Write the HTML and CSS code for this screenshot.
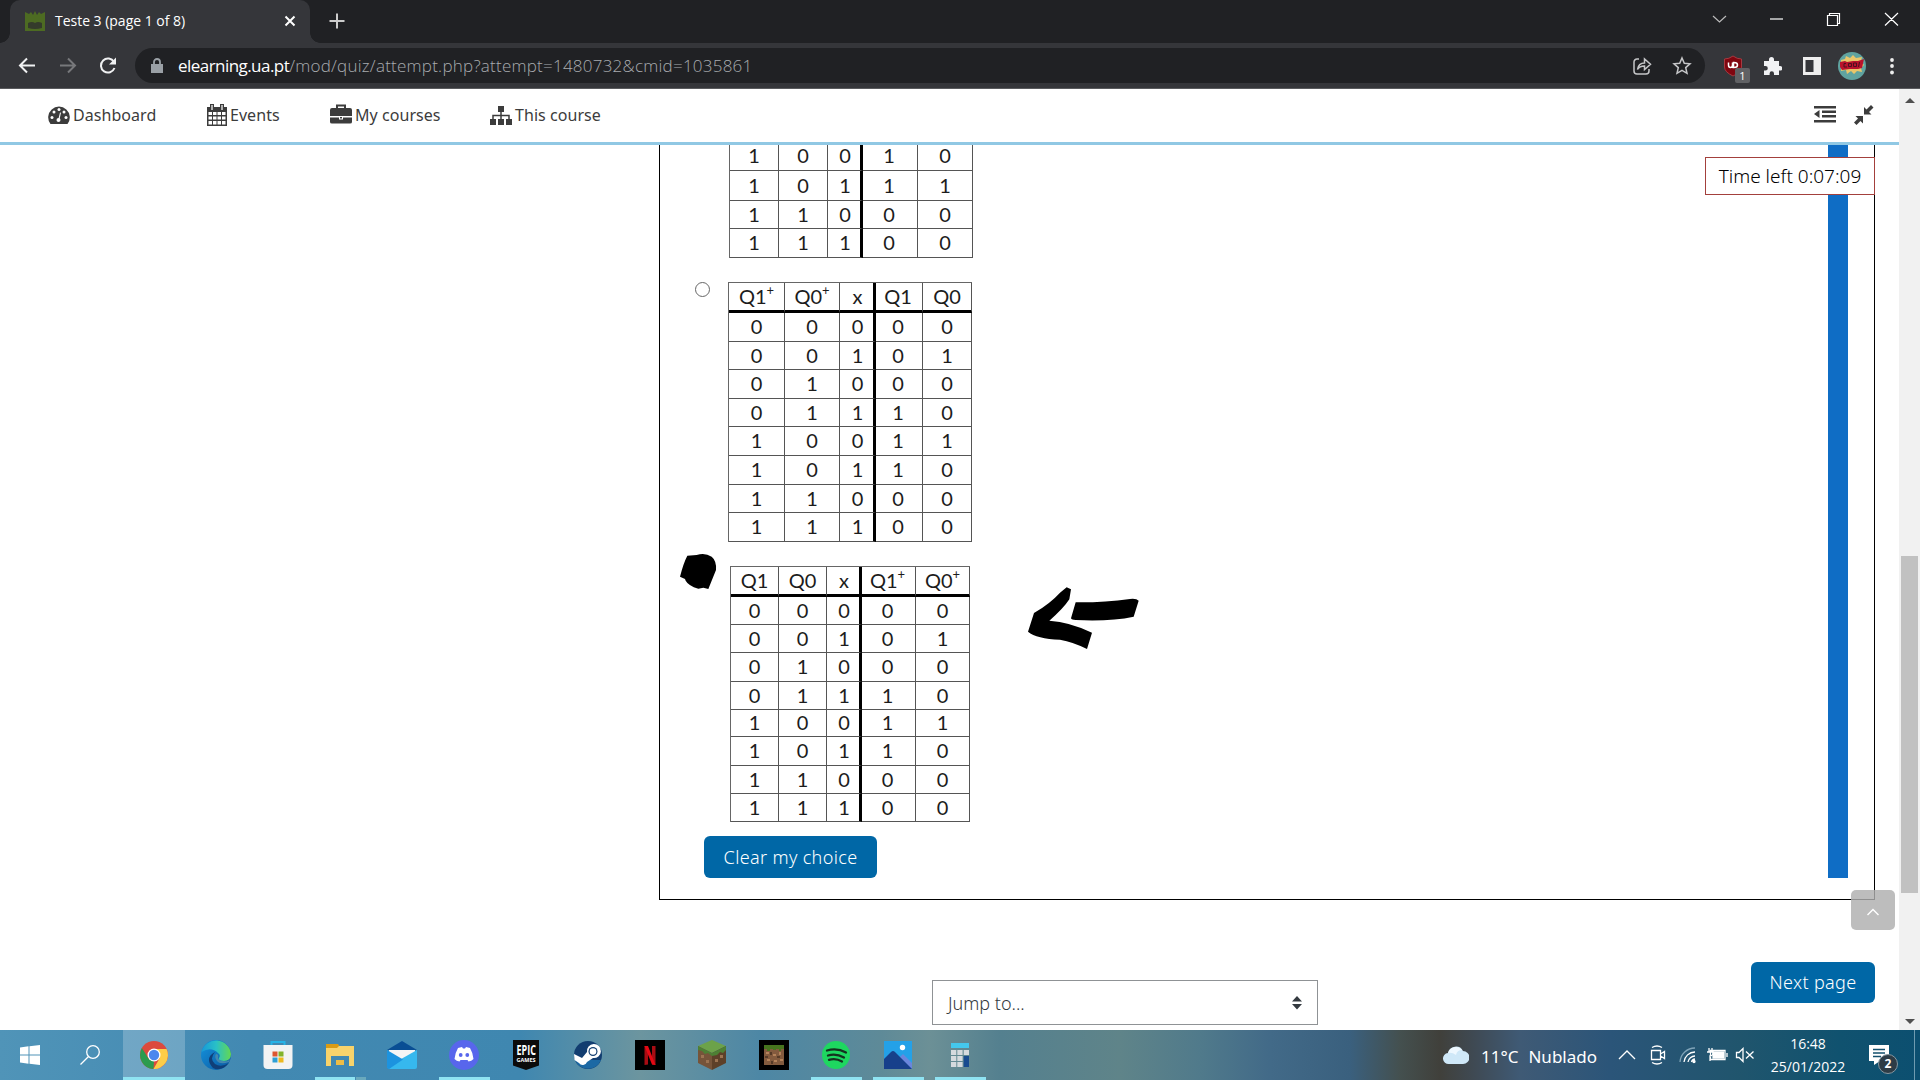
FILE: index.html
```html
<!DOCTYPE html>
<html lang="en">
<head>
<meta charset="utf-8">
<title>Teste 3 (page 1 of 8)</title>
<link rel="stylesheet" href="styles.css">
</head>
<body>
<div class="tabstrip">
  <div class="tab">
    <svg class="favicon" width="20" height="20" viewBox="0 0 20 20"><path fill="#4d6b22" d="M0 1l4 2 2-2 2 3 2-4 2 4 2-3 2 2 4-2v19H0z"/><path fill="#343b2b" d="M3 12q4-2 7 0 3-2 7 0v5q-7 2-14 0z"/></svg>
    <span class="tab-title">Teste 3 (page 1 of 8)</span>
    <svg class="tab-close" width="12" height="12" viewBox="0 0 12 12"><path d="M1.500 1.500l9 9m0-9l-9 9" stroke="#fff" stroke-width="2"/></svg>
  </div>
  <svg class="new-tab" width="16" height="16" viewBox="0 0 16 16"><path d="M8 .5v15M.5 8h15" stroke="#ccc" stroke-width="2"/></svg>
  <svg class="window-controls" width="190" height="16" viewBox="0 0 190 16" fill="none" stroke="#fff" stroke-width="1.200"><path d="M4 5l6.500 6 6.500-6" stroke="#bbb"/><path d="M61 8h13"/><path d="M118.500 4.500h10v10h-10zM120.500 4.500v-2h10v10h-2M176 2l13 12.500m0-12.500l-13 12.500"/></svg>
</div>
<div class="toolbar">
  <svg class="nav-buttons" width="120" height="20" viewBox="0 0 120 20" fill="none" stroke="#f0f1f2" stroke-width="2"><path d="M17 9.500H2M9 2.500l-7 7 7 7"/><path stroke="#77787b" d="M42 9.500h15M50 2.500l7 7-7 7"/><path d="M96 6a7 7 0 1 0 .5 6"/><path fill="#f0f1f2" stroke="none" d="M98 1.500v7h-7z"/></svg>
  <div class="omnibox">
    <svg width="12" height="16" viewBox="0 0 12 16"><path fill="#9aa0a6" d="M0 6h12v9H0z"/><path d="M3 7V4a3 3 0 0 1 6 0v3" fill="none" stroke="#9aa0a6" stroke-width="1.800"/></svg>
    <span class="url"><b>elearning.ua.pt</b>/mod/quiz/attempt.php?attempt=1480732&amp;cmid=1035861</span>
    <svg class="share" width="60" height="20" viewBox="0 0 60 20" fill="none" stroke="#c5c6c8" stroke-width="1.500"><path d="M6 3H4a3 3 0 0 0-3 3v9a3 3 0 0 0 3 3h9a3 3 0 0 0 3-3v-2M4.500 13.500q1-6.500 7-6.500V3l6 5.300-6 5.200v-3.500q-5 0-7 3.500z"/><path d="M49 2l2.300 5.300 5.700.5-4.300 3.800 1.300 5.700-5-3-5 3 1.300-5.700L41 7.800l5.700-.5z"/></svg>
  </div>
  <div class="extension">
    <svg width="26" height="28" viewBox="0 0 26 28"><path fill="#800610" stroke="#a63a40" d="M10 1q4 3 8.500 3v8q0 5-8.500 9-8.500-4-8.500-9V4q4.500 0 8.500-3z"/><path d="M5.500 7.500v2.500q0 2.500 2 2.500t2-2.500V7.500m0 5h1.500q3.500 0 3.500-2.500t-3.500-2.500H10.500v5" fill="none" stroke="#fff" stroke-width="1.500"/></svg>
    <span class="count">1</span>
  </div>
  <svg class="puzzle" width="18" height="18" viewBox="0 0 18 18"><path fill="#f1f2f4" d="M0 4h5V2.500a2.500 2.500 0 0 1 5 0V4h5v5h1a2.300 2.300 0 0 1 0 4.600h-1V18h-5v-1.500a2.200 2.200 0 0 0-4.400 0V18H0v-4.500h1.500a2.300 2.300 0 0 0 0-4.600H0z"/></svg>
  <svg class="side-panel" width="18" height="18" viewBox="0 0 18 18"><path fill="#eee" d="M0 0h18v18H0z"/><path fill="#35363a" d="M2.500 3h8v12h-8z"/></svg>
  <svg class="avatar" width="28" height="28" viewBox="0 0 28 28"><circle cx="14" cy="14" r="14" fill="#5fa3a0"/><path fill="#e9c66a" d="M3 8l4-1 1-3 4 2 3-3 3 3 6-1-1 4 3 4-3 3 1 4-5-1-3 3-3-3-4 3-1-4-5 1z"/><path fill="#b9132b" d="M2 10l5-1 2 1 6-1 5 0 6-2-2 9-4 1-8 0-8 1-2-3z"/><path d="M8 11.500l-2 0v3.500h3m1.500-3.500v3h3v-3zm5-.5v3.500h3v-3.500zm6-1l-1 5" stroke="#4a1020" fill="none"/></svg>
  <svg class="kebab" width="4" height="18" viewBox="0 0 4 18" fill="#eee"><circle cx="2" cy="3" r="1.900"/><circle cx="2" cy="9" r="1.900"/><circle cx="2" cy="15.500" r="1.900"/></svg>
</div>
<div class="viewport">
  <div class="page">
    <header class="site-nav">
      <a class="nav-dashboard"><svg width="22" height="22" viewBox="0 0 22 22"><path fill="#3c3c3c" d="M2.500 20A10.800 10.800 0 1 1 19.500 20z"/><g fill="#fff"><circle cx="4" cy="13.500" r="1.500"/><circle cx="6" cy="8" r="1.500"/><circle cx="11" cy="5.500" r="1.500"/><circle cx="16" cy="8" r="1.500"/><circle cx="18" cy="13.500" r="1.500"/><circle cx="10.500" cy="16" r="2"/><path d="M12 8.500l1 .3-1.700 7.500-1.200-.2z"/></g></svg>Dashboard</a>
      <a class="nav-events"><svg width="20" height="22" viewBox="0 0 20 22"><path fill="#3c3c3c" d="M0 3h20v19H0z"/><path stroke="#3c3c3c" stroke-width="4" d="M5 0v5M15 0v5"/><path stroke="#fff" stroke-width="1.200" d="M5 1v5M15 1v5"/><path fill="#fff" d="M1.500 8h3.500v3H1.500zM6 8h3.500v3H6zM10.500 8H14v3h-3.500zM15 8h3.500v3H15zM1.500 12.500h3.500v3H1.500zm4.500 0h3.500v3H6zm4.500 0H14v3h-3.500zm4.500 0h3.500v3H15zM1.500 17h3.500v3.500H1.500zM6 17h3.500v3.500H6zm4.500 0H14v3.500h-3.500zm4.500 0h3.500v3.500H15z"/></svg>Events</a>
      <a class="nav-mine"><svg width="22" height="22" viewBox="0 0 22 22"><path d="M7 5V1.500h8V5" fill="none" stroke="#3c3c3c" stroke-width="2"/><path fill="#3c3c3c" d="M2 4h18q2 0 2 2v6H0V6q0-2 2-2zM0 13.500h9v2h4v-2h9V18q0 1.500-2 1.500H2q-2 0-2-1.500zM10 13h2v1.500h-2z"/></svg>My courses</a>
      <a class="nav-course"><svg width="22" height="22" viewBox="0 0 22 22"><path fill="#3c3c3c" d="M8 2h6v6H8zM0 15h6v6H0zM8 15h6v6H8zM16 15h6v6h-6z"/><path d="M11 7v9M3 16v-4.500h16V16" fill="none" stroke="#3c3c3c" stroke-width="1.500"/></svg>This course</a>
      <svg class="view-tools" width="60" height="20" viewBox="0 0 60 20" fill="#3c3c3c"><path d="M0 1h22v2.600H0zM8 5.500h14v2.600H8zM8 10h14v2.600H8zM0 15h22v2.600H0zM5.500 5v8L0 9z"/><path d="M50 9.500V2l2.500 2.500L57 0l2.500 2.500L55 7l2.500 2.500zM49 11v7.500L46.500 16 42.500 20 40 17.500 44 13.500 41.500 11z"/></svg>
    </header>
    <main class="quiz">
      <div class="timer">Time left 0:07:09</div>
      <section class="question">
        <div class="answers">
          <div class="truth t1">
            <i>1</i><i>0</i><i>0</i><i>1</i><i>0</i>
            <i>1</i><i>0</i><i>1</i><i>1</i><i>1</i>
            <i>1</i><i>1</i><i>0</i><i>0</i><i>0</i>
            <i>1</i><i>1</i><i>1</i><i>0</i><i>0</i>
          </div>
          <div class="choice">
            <span class="radio"></span>
            <div class="truth t2">
              <i class="h">Q1<sup>+</sup></i><i class="h">Q0<sup>+</sup></i><i class="h">x</i><i class="h">Q1</i><i class="h">Q0</i>
              <i>0</i><i>0</i><i>0</i><i>0</i><i>0</i>
              <i>0</i><i>0</i><i>1</i><i>0</i><i>1</i>
              <i>0</i><i>1</i><i>0</i><i>0</i><i>0</i>
              <i>0</i><i>1</i><i>1</i><i>1</i><i>0</i>
              <i>1</i><i>0</i><i>0</i><i>1</i><i>1</i>
              <i>1</i><i>0</i><i>1</i><i>1</i><i>0</i>
              <i>1</i><i>1</i><i>0</i><i>0</i><i>0</i>
              <i>1</i><i>1</i><i>1</i><i>0</i><i>0</i>
            </div>
          </div>
          <div class="truth t3">
            <i class="h">Q1</i><i class="h">Q0</i><i class="h">x</i><i class="h">Q1<sup>+</sup></i><i class="h">Q0<sup>+</sup></i>
            <i>0</i><i>0</i><i>0</i><i>0</i><i>0</i>
            <i>0</i><i>0</i><i>1</i><i>0</i><i>1</i>
            <i>0</i><i>1</i><i>0</i><i>0</i><i>0</i>
            <i>0</i><i>1</i><i>1</i><i>1</i><i>0</i>
            <i>1</i><i>0</i><i>0</i><i>1</i><i>1</i>
            <i>1</i><i>0</i><i>1</i><i>1</i><i>0</i>
            <i>1</i><i>1</i><i>0</i><i>0</i><i>0</i>
            <i>1</i><i>1</i><i>1</i><i>0</i><i>0</i>
          </div>
          <a class="btn clear">Clear my choice</a>
        </div>
        <div class="edge-bar"></div>
      </section>
      <svg class="ink" width="480" height="120" viewBox="0 0 1440 360"><path d="M22 47L50 45Q75 37 95 50Q110 62 108 90L85 147L70 143L55 146Q25 137 17 122L15 117L0 110Q10 70 22 47Z"/><g transform="translate(0 41)"><path d="M1160 101L1173 107L1168 137Q1150 165 1108 201Q1170 205 1236 237L1221 286Q1180 265 1140 258Q1070 255 1044 234L1062 178Q1110 150 1140 117Z"/><path d="M1187 146Q1270 147 1350 136Q1370 134 1376 141L1361 189Q1290 204 1187 199Q1175 199 1173 194Z"/></g></svg>
      <div class="page-actions">
        <div class="jump">Jump to...<svg width="10" height="14" viewBox="0 0 10 14"><path fill="#343a40" d="M0 5.500L5 0l5 5.500zM0 8h10l-5 5.500z"/></svg></div>
        <a class="btn next">Next page</a>
      </div>
      <div class="to-top"><svg width="12" height="8" viewBox="0 0 12 8"><path d="M.5 7L6 1.500 11.500 7" fill="none" stroke="#fff" stroke-width="1.400"/></svg></div>
    </main>
  </div>
  <div class="scrollbar"><span class="arrow-up"></span><span class="thumb"></span><span class="arrow-down"></span></div>
</div>
<footer class="taskbar">
  <div class="app start"><svg width="20" height="20" viewBox="0 0 20 20" fill="#fff"><path d="M0 2.500l8.500-1.200v8.200H0zM9.500 1.200L20 0v9.500H9.500zM0 10.500h8.500v8.200L0 17.500zM9.500 10.500H20V20L9.500 18.800z"/></svg></div>
  <div class="app search"><svg width="20" height="20" viewBox="0 0 20 20" fill="none" stroke="#fff" stroke-width="1.300"><circle cx="13" cy="7" r="6.300"/><path d="M8.500 11.500L.5 19.500"/></svg></div>
  <div class="app open active"><svg width="28" height="28" viewBox="0 0 28 28"><circle cx="14" cy="14" r="14" fill="#dc4a3d"/><path fill="#2c9b4f" d="M1.900 7L8.500 17.500 14 20.500 13.500 28A14 14 0 0 1 1.900 7z"/><path fill="#fccd48" d="M14 8h12.600A14 14 0 0 1 13.500 28L19.500 17.500z"/><circle cx="14" cy="14" r="6.500" fill="#fff"/><circle cx="14" cy="14" r="5.200" fill="#4c87ee"/></svg></div>
  <div class="app"><svg width="30" height="30" viewBox="0 0 30 30"><defs><linearGradient id="edge-top"><stop stop-color="#1899d8"/><stop offset=".5" stop-color="#29c0c7"/><stop offset="1" stop-color="#64d851"/></linearGradient><linearGradient id="edge-low" x1="0" y1="0" x2="1" y2="1"><stop stop-color="#1595df"/><stop offset="1" stop-color="#0a579f"/></linearGradient></defs><circle cx="15" cy="15" r="15" fill="url(#edge-low)"/><path fill="url(#edge-top)" d="M.5 12A15 15 0 0 1 30 14q0 7-7 7-6 0-5-3 2-3-1-5Q10 6 .5 12z"/><path fill="#103f78" d="M14 12q-6 7 0 12 6 4 14-1Q20 32 12 28 3 18 14 12z"/><path fill="#4487ae" d="M17 18q2 4 10 3l2-2-1 3q-9 3-12-1-3-4-1-7 3 0 2 4z"/></svg></div>
  <div class="app"><svg width="30" height="30" viewBox="0 0 30 30"><path d="M8.500 7V2h13v5" fill="none" stroke="#27b3e6" stroke-width="2"/><path fill="#f3f3f3" d="M.5 5h29v20q0 4-4 4h-21q-4 0-4-4z"/><path fill="#dd5631" d="M9.500 11.500h5v5h-5z"/><path fill="#83b32b" d="M15.500 11.500h5v5h-5z"/><path fill="#2f9fd4" d="M9.500 17.500h5v5h-5z"/><path fill="#edb91f" d="M15.500 17.500h5v5h-5z"/></svg></div>
  <div class="app open multi"><svg width="28" height="24" viewBox="0 0 28 24"><path fill="#d99b14" d="M0 1h12l2 3v5H0z"/><path fill="#f8d36b" fill-rule="evenodd" d="M0 5h11l2-2h15v20H0zM5 13v10h18V13z"/><path fill="#eebd46" fill-rule="evenodd" d="M10 17h8v5h-8z"/></svg></div>
  <div class="app"><svg width="30" height="28" viewBox="0 0 30 28"><path fill="#094e94" d="M0 9L15 0l15 9z"/><path fill="#f5f5f5" d="M2 9h26v10H2z"/><path fill="#36b8ee" d="M30 9v17q0 2-2 2H2l-2-2z"/><path fill="#1c93df" d="M0 9l16 9.500L2 28q-2 0-2-2z"/></svg></div>
  <div class="app open"><svg width="30" height="30" viewBox="0 0 30 30"><circle cx="15" cy="15" r="15" fill="#5866ec"/><path fill="#fff" d="M9 8l4-1 1 1.500h2L17 7l4 1q3 5 3.500 11-2 2-5 2.500L18.500 20h-7l-1 1.500q-3-.5-5-2.500Q6 13 9 8z"/><circle cx="11.700" cy="15" r="1.900" fill="#5866ec"/><circle cx="18.300" cy="15" r="1.900" fill="#5866ec"/></svg></div>
  <div class="app"><div class="epic"><b>EPIC</b><small>GAMES</small></div></div>
  <div class="app"><svg width="28" height="28" viewBox="0 0 28 28"><circle cx="14" cy="14" r="14" fill="#123d70"/><path fill="#1c69a4" d="M1 19h26A14 14 0 0 1 1 19z"/><path fill="#fff" d="M0 13l8 4 5-6a7 7 0 1 1 6 6l-6 4a4.500 4.500 0 0 1-8 1L.5 19z"/><circle cx="19" cy="10.500" r="4.500" fill="#123d70"/><circle cx="19" cy="10.500" r="3.300" fill="#fff"/></svg></div>
  <div class="app"><svg width="30" height="30" viewBox="0 0 30 30"><path d="M0 0h30v30H0z"/><path fill="#a80c13" d="M9.500 6H13v18.500l-3.500.5zM17 6h3.500v19L17 24.500z"/><path fill="#e50914" d="M9.500 6H13l7.500 19-3.500-.5z"/></svg></div>
  <div class="app"><svg width="28" height="30" viewBox="0 0 28 30"><path fill="#6ca24a" d="M14 0l14 6-14 7L0 6z"/><path fill="#76543a" d="M0 6l14 7v17L0 23z"/><path fill="#5d4029" d="M28 6l-14 7v17l14-7z"/><path fill="#4d8034" d="M0 6l14 7 14-7v4l-3 3-3-1-3 3-5 1-4-3-3 1-3-3-4-1z"/><path fill="#9b7352" d="M3 15h3v3H3zM8 20h3v3H8zM17 19h3v3h-3zM22 15h3v3h-3z"/></svg></div>
  <div class="app"><svg width="30" height="30" viewBox="0 0 30 30"><path d="M0 0h30v30H0z"/><path fill="#835b3e" d="M5 5h20v20H5z"/><path fill="#47741e" d="M5 5h20v4h-3v2h-2V9h-3v1h-3V9h-3v2H8V9H5z"/><path fill="#b3825a" d="M7 12h3v2H7zM14 14h3v2h-3zM20 12h2v3h-2zM8 19h3v2H8zM15 20h3v2h-3zM21 19h3v2h-3z"/><path fill="#563b28" d="M11 12h2v3h-2zM18 16h3v2h-3zM6 16h3v2H6zM12 21h2v3h-2z"/></svg></div>
  <div class="app open"><svg width="28" height="28" viewBox="0 0 28 28"><circle cx="14" cy="14" r="14" fill="#1ed760"/><path d="M5 9.500q10-3 19 2M6 14.500q8-2.500 16 2M7 18.800q7-2 13 1.700" fill="none" stroke="#15321f" stroke-width="2.300" stroke-linecap="round"/></svg></div>
  <div class="app open"><svg width="28" height="28" viewBox="0 0 28 28"><path fill="#24a1e8" d="M0 0h28v28H0z"/><circle cx="18.500" cy="6.500" r="2.700" fill="#fff"/><path fill="#6a86dc" d="M14 18l5-5 9 9v6H14z"/><path fill="#17408b" d="M0 18l7-7q2-2 4 0l17 17H0z"/></svg></div>
  <div class="app open"><svg width="18" height="26" viewBox="0 0 18 26"><path fill="#44c8ed" d="M0 1h18v5H0z"/><path fill="#d5dade" d="M0 8h5.300v5H0zM6.300 8h5.300v5H6.300zM12.700 8H18v5h-5.300zM0 14h5.300v5H0zM6.300 14h5.300v5H6.300zM0 20h5.300v5H0zM6.300 20h5.300v5H6.300z"/><path fill="#174b90" d="M12.700 14H18v11h-5.300z"/></svg></div>
  <div class="tray">
    <svg width="26" height="20" viewBox="0 0 26 20"><path fill="#cfe8f8" d="M6 19a5.500 5.500 0 0 1-1-11 8 8 0 0 1 15-2 6.500 6.500 0 0 1 0 13z"/><path fill="#eef8ff" d="M5 8a8 8 0 0 1 14-3q-5 0-6 5-4-3-8-2z"/></svg>
    <span class="weather">11°C<span>Nublado</span></span>
    <svg class="status" width="140" height="20" viewBox="0 0 140 20" fill="none" stroke="#fff" stroke-width="1.300"><path d="M1 14l8-8 8 8"/><path d="M33.500 5.500h9v9h-9zM42.500 9l4-2.500v7l-4-2.500M34 2.500q5-3 10 0M34 17.500q5 3 10 0"/><path d="M62 17A15 15 0 0 1 77 3" stroke="#7fa3b8"/><path d="M66 17A11 11 0 0 1 77 7M70 17a7 7 0 0 1 7-6M73.500 17a4 4 0 0 1 3.500-3"/><circle cx="76" cy="16.500" r="1" fill="#fff"/><path d="M92.500 5.500H107v9H92.500zM109 8v4M91 3v4M94 3v4M89 7h6v2q-1 2-3 2v5"/><path fill="#fff" d="M95 7h10.500v6H95z"/><path d="M118.500 7.500h2.500l4-4v13l-4-4h-2.500zM128 6.500l7.500 7m0-7l-7.500 7"/></svg>
    <div class="clock"><span class="time">16:48</span><span>25/01/2022</span></div>
    <div class="notify"><svg width="20" height="20" viewBox="0 0 20 20"><path fill="#fff" d="M0 0h20v16h-9l-6 4v-4H0z"/><path d="M4 4.500h12M4 8h12M4 11.500h8" stroke="#14506e" stroke-width="1.300"/></svg><span class="badge">2</span></div>
    <span class="peek"></span>
  </div>
</footer>
</body>
</html>
```
FILE: styles.css
```css
* { box-sizing: border-box; }
body { margin: 0; width: 1920px; height: 1080px; overflow: hidden; background: #fff; font-family: "Noto Sans", sans-serif; color: #3c3c3c; display: flex; flex-direction: column; }
svg { display: block; flex: none; }
a, i { text-decoration: none; font-style: normal; }

/* browser chrome */
.tabstrip { height: 43px; background: #202124; display: flex; align-items: center; padding-left: 10px; flex: none; }
.tab { position: relative; width: 300px; height: 43px; background: #35363a; border-radius: 10px 10px 0 0; display: flex; align-items: center; padding-left: 15px; }
.tab::before, .tab::after { content: ""; position: absolute; bottom: 0; width: 10px; height: 10px; }
.tab::before { left: -10px; background: radial-gradient(circle at 0 0, #202124 9.5px, #35363a 10px); }
.tab::after { right: -10px; background: radial-gradient(circle at 100% 0, #202124 9.5px, #35363a 10px); }
.favicon, .tab-title, .tab-close { margin-top: -2px; }
.tab-title { margin-left: 10px; width: 229px; flex: none; font: 14px "Open Sans", sans-serif; color: #fff; letter-spacing: -.02px; white-space: nowrap; }
.new-tab { margin: -2px 0 0 19px; }
.window-controls { margin-left: auto; margin-right: 21px; margin-top: -5px; }
.toolbar { height: 46px; background: #35363a; border-bottom: 1px solid #5a5b5e; display: flex; align-items: center; padding-left: 18px; flex: none; }
.nav-buttons { margin-right: -3px; }
.omnibox { width: 1570px; height: 35px; border-radius: 18px; background: #202124; display: flex; align-items: center; padding: 0 12px 0 16px; }
.url { margin-left: 15px; font: 300 17px "Open Sans", sans-serif; color: #a8abaf; white-space: nowrap; letter-spacing: .24px; }
.url b { font-weight: 400; color: #fff; letter-spacing: -.55px; }
.share { margin-left: auto; }
.extension { position: relative; margin-left: 18px; width: 28px; height: 22px; }
.count { position: absolute; left: 12px; top: 13px; width: 15px; height: 15px; border-radius: 2px; background: #606164; color: #fff; font: 11px/15px "Open Sans", sans-serif; text-align: center; }
.puzzle { margin-left: 13px; }
.side-panel { margin-left: 21px; }
.avatar { margin-left: 17px; }
.kebab { margin-left: 24px; }

/* page */
.viewport { display: flex; height: 941px; flex: none; }
.page { width: 1899px; }
.site-nav { height: 56px; border-bottom: 3px solid #90c8e4; display: flex; align-items: center; padding: 0 25px 2px 48px; font-size: 16px; letter-spacing: .05px; }
.site-nav a { display: flex; align-items: center; gap: 3px; white-space: nowrap; }
.nav-dashboard { width: 159px; }
.nav-events { width: 123px; }
.nav-mine { width: 160px; }
.view-tools { margin-left: auto; }
.quiz { position: relative; height: 885px; overflow: hidden; }
.timer { position: absolute; right: 24px; top: 12px; width: 170px; height: 38px; border: 1px solid #a3403c; background: #fff; color: #000; font-size: 19px; font-weight: 300; line-height: 36px; text-align: center; white-space: nowrap; }
.question { margin-left: 659px; width: 1216px; height: 755px; border: 1px solid #000; border-top: 0; display: flex; justify-content: space-between; }
.answers { padding-left: 35px; }
.edge-bar { width: 20px; height: 733px; background: #0f6dc5; margin-right: 26px; }
.truth { display: grid; font: 20px Lato, sans-serif; color: #1c1c1c; border: 1px solid #666; border-width: 1px 0 0 1px; width: max-content; }
.truth i { display: flex; align-items: center; justify-content: center; border-right: 1px solid #555; border-bottom: 1px solid #555; line-height: 1; padding-bottom: 2px; }
.truth i:nth-child(5n+3) { border-right: 3px solid #000; padding-left: 2px; }
.truth i:nth-child(5n+4) { padding-right: 2px; }
.truth .h { border-bottom: 3px solid #000; }
.truth sup { font-size: 13px; line-height: 1; align-self: flex-start; margin-top: 1px; }
.t1 { margin: -4px 0 0 34px; grid-template-columns: 49px 49px 35px 55px 55px; grid-template-rows: 29px 30px 28px 29px; }
.choice { display: flex; margin-top: 24px; }
.radio { width: 15px; height: 15px; border: 1px solid #666; border-radius: 50%; margin-right: 18px; }
.t2 { grid-template-columns: 56px 55px 36px 47px 49px; grid-template-rows: 30px 29px 28px 29px 28px 29px 29px 28px 29px; }
.t3 { margin: 24px 0 0 35px; grid-template-columns: 48px 48px 35px 54px 54px; grid-template-rows: 30px 28px 28px 29px 28px 27px 29px 28px 28px; }
.btn { display: flex; align-items: center; justify-content: center; background: #0067a6; border-radius: 6px; color: #fff; font-size: 18px; font-weight: 300; letter-spacing: .35px; white-space: nowrap; padding-bottom: 1px; }
.clear { width: 173px; height: 42px; margin: 14px 0 0 9px; }
.next { width: 124px; height: 41px; }
.ink { position: absolute; left: 680px; top: 395px; pointer-events: none; }
.page-actions { display: flex; justify-content: space-between; padding: 62px 24px 0 932px; }
.jump { width: 386px; height: 45px; margin-top: 18px; border: 1px solid #8f9295; display: flex; align-items: center; justify-content: space-between; padding: 0 15px; font-size: 18px; font-weight: 300; color: #333a40; }
.to-top { position: absolute; left: 1851px; top: 745px; width: 44px; height: 40px; border-radius: 5px; background: rgba(175, 175, 175, .82); display: flex; align-items: center; justify-content: center; padding-top: 4px; }
.scrollbar { width: 21px; background: #f1f1f1; display: flex; flex-direction: column; align-items: center; padding: 9px 0 6px; }
.arrow-up, .arrow-down { border: 5px solid transparent; border-top: 0; border-bottom-color: #505050; }
.arrow-down { border: 5px solid transparent; border-bottom: 0; border-top-color: #505050; margin-top: auto; }
.thumb { width: 17px; height: 337px; background: #c1c1c1; margin-top: 453px; }

/* taskbar */
.taskbar { height: 50px; flex: none; display: flex; color: #fff; background: linear-gradient(90deg, #5094b8 0, #4289b2 250px, #3f87b0 520px, #6c959f 640px, #4d87a5 760px, #5e8a98 880px, #6c9096 930px, #54808f 1000px, #5f8489 1120px, #507a8b 1200px, #426a88 1270px, #3a607e 1350px, #44504f 1400px, #40403b 1440px, #3f4a54 1475px, #3f5a75 1520px, #2b5579 1610px, #20556d 1740px, #10526f 1840px, #0c4f70 1920px); }
.app { width: 62px; display: flex; align-items: center; justify-content: center; border-bottom: 3px solid transparent; padding-top: 3px; }
.start { margin-left: -1px; }
.search { padding-right: 4px; }
.open { background: linear-gradient(#8fe3f2, #8fe3f2) 50% 100% / 51px 3px no-repeat border-box; }
.active { background: linear-gradient(#8fe3f2, #8fe3f2) 0 100% / 62px 3px no-repeat border-box, rgba(255, 255, 255, .22) border-box; }
.multi { background: linear-gradient(90deg, #8fe3f2 40px, #4289b2 40px, #4289b2 41px, #69a9bd 41px) 50% 100% / 51px 3px no-repeat border-box; }
.epic { width: 26px; height: 30px; background: #0b0b0b; clip-path: polygon(0 0, 100% 0, 100% 85%, 50% 100%, 0 85%); display: flex; flex-direction: column; align-items: center; padding-top: 2px; }
.epic b { font: 700 15px/15px "Open Sans", sans-serif; transform: scaleX(.6); }
.epic small { font: 700 5.500px/7px "Open Sans", sans-serif; }
.tray { margin-left: auto; width: 477px; display: flex; align-items: center; white-space: nowrap; }
.weather { font-size: 17px; margin: 2px 0 0 12px; width: 116px; display: flex; justify-content: space-between; }
.status { margin-left: 21px; }
.clock { width: 76px; margin-left: 12px; display: flex; flex-direction: column; align-items: center; font: 14px/23px "Open Sans", sans-serif; }
.notify { position: relative; margin-left: 23px; width: 45px; height: 20px; }
.badge { position: absolute; left: 9px; top: 9px; width: 20px; height: 20px; border: 1px solid #8797a0; border-radius: 50%; background: #2e3c46; font: 700 12px/18px "Open Sans", sans-serif; text-align: center; }
.peek { width: 1px; height: 50px; background: #6f9bb0; }
```
